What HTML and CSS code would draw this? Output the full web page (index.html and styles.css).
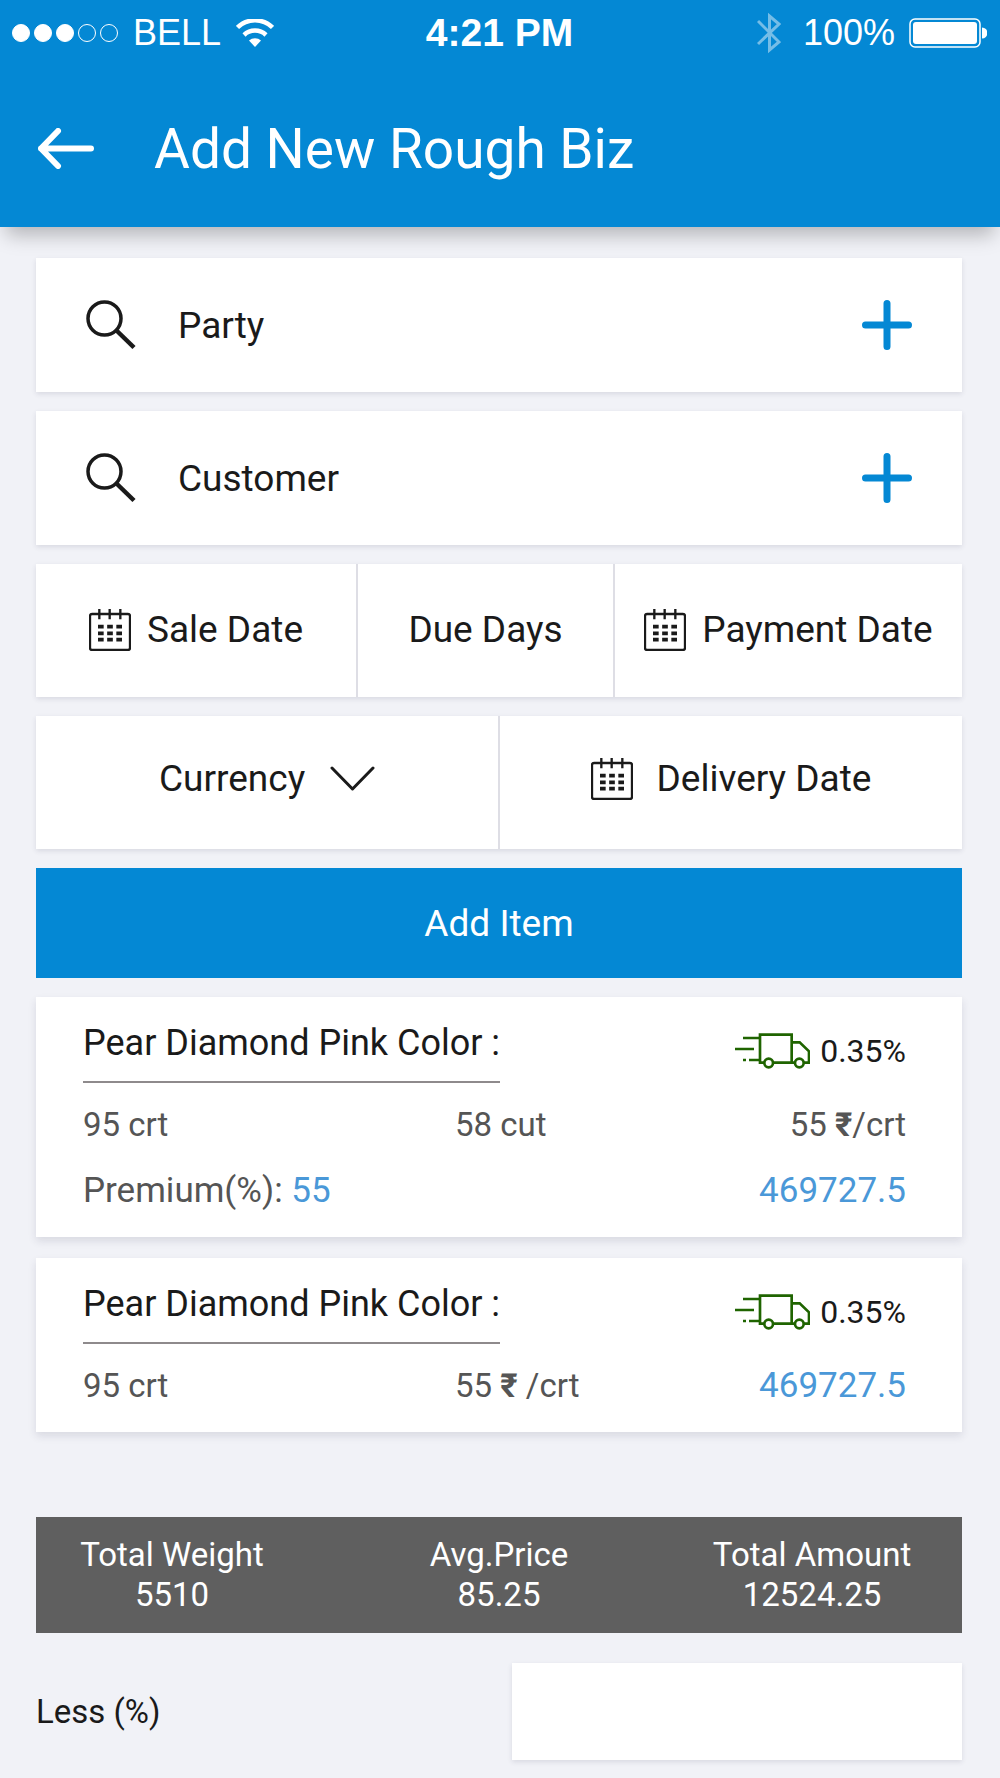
FILE: index.html
```html
<!DOCTYPE html>
<html lang="en">
<head>
    <meta charset="UTF-8">
    <meta name="viewport" content="width=device-width, initial-scale=1.0">
    <title>Add New Rough Biz</title>
    <link rel="stylesheet" href="styles.css">
</head>
<body>
    <svg class="sprite" aria-hidden="true">
        <symbol id="search" viewBox="0 0 50 50">
            <circle cx="18.5" cy="18.5" r="16.5" fill="none" stroke="currentColor" stroke-width="3.5"/>
            <path d="M30.5 30.5L48 47.5" stroke="currentColor" stroke-width="4.5"/>
        </symbol>
        <symbol id="plus" viewBox="0 0 50 50">
            <path d="M25 3.5v43M3.5 25h43" stroke="currentColor" stroke-width="7" stroke-linecap="round"/>
        </symbol>
        <symbol id="calendar" viewBox="0 0 126 126">
            <rect x="3" y="15" width="120" height="108" rx="6" fill="none" stroke="currentColor" stroke-width="7"/>
            <path d="M31 0v31M62 0v31M94 0v31" stroke="currentColor" stroke-width="7"/>
            <path d="M27 53h72M27 73h72M27 92h72" stroke="currentColor" stroke-width="11" stroke-dasharray="17 10.5"/>
        </symbol>
        <symbol id="truck" viewBox="0 0 225 108">
            <g fill="none" stroke="currentColor" stroke-width="8">
                <path d="M24 15h50M0 48h57M24 81h9M42 81h32"/>
                <path d="M87 89H75V5h95v84M114 89h66M170 28h24l28 27v34h-15"/>
                <circle cx="101" cy="90" r="13"/>
                <circle cx="193" cy="90" r="13"/>
            </g>
        </symbol>
    </svg>

    <header class="app-header">
        <div class="status-bar">
            <div class="carrier">
                <span class="signal"><i class="on"></i><i class="on"></i><i class="on"></i><i></i><i></i></span>
                <span>BELL</span>
                <svg class="wifi" viewBox="0 0 38 28" fill="none" stroke="currentColor" stroke-width="4.5">
                    <path d="M1.5 8.5A25 25 0 0 1 36.5 8.5M8 16A16 16 0 0 1 30 16"/>
                    <path d="M19 28l-6-6.5a9 9 0 0 1 12 0z" fill="currentColor" stroke="none"/>
                </svg>
            </div>
            <span class="clock">4:21 PM</span>
            <div class="power">
                <svg class="bluetooth" viewBox="0 0 24 42" fill="none" stroke="currentColor" stroke-width="3">
                    <path d="M1 9l21 21-9.5 8V4L22 12 1 32"/>
                </svg>
                <span>100%</span>
                <svg class="battery" viewBox="0 0 78 30">
                    <rect x="1" y="1" width="70" height="28" rx="5" fill="none" stroke="currentColor" stroke-width="1.5"/>
                    <rect x="4" y="4" width="64" height="22" rx="3" fill="currentColor"/>
                    <path d="M73 9.5a5.5 5.5 0 0 1 0 11z" fill="currentColor"/>
                </svg>
            </div>
        </div>
        <div class="title-bar">
            <a href="#" class="back" aria-label="Back">
                <svg viewBox="0 0 56 41" fill="none" stroke="currentColor" stroke-width="6" stroke-linecap="round" stroke-linejoin="round">
                    <path d="M20 3L3 20.5 20 38M3 20.5h50"/>
                </svg>
            </a>
            <h1>Add New Rough Biz</h1>
        </div>
    </header>

    <main class="form">
        <div class="card lookup">
            <svg class="icon-search"><use href="#search"/></svg>
            <input type="text" placeholder="Party" aria-label="Party">
            <button type="button" class="add" aria-label="Add party"><svg><use href="#plus"/></svg></button>
        </div>
        <div class="card lookup">
            <svg class="icon-search"><use href="#search"/></svg>
            <input type="text" placeholder="Customer" aria-label="Customer">
            <button type="button" class="add" aria-label="Add customer"><svg><use href="#plus"/></svg></button>
        </div>

        <div class="card fields dates">
            <button type="button" class="field"><svg class="icon-calendar"><use href="#calendar"/></svg>Sale Date</button>
            <input type="text" class="field" placeholder="Due Days" aria-label="Due Days">
            <button type="button" class="field"><svg class="icon-calendar"><use href="#calendar"/></svg>Payment Date</button>
        </div>
        <div class="card fields delivery">
            <div class="field">
                <select aria-label="Currency">
                    <option>Currency</option>
                    <option>INR</option>
                    <option>USD</option>
                </select>
                <svg class="chevron" viewBox="0 0 45 25" fill="none" stroke="currentColor" stroke-width="3" stroke-linecap="round" stroke-linejoin="round">
                    <path d="M2 2l20.5 21L43 2"/>
                </svg>
            </div>
            <button type="button" class="field"><svg class="icon-calendar"><use href="#calendar"/></svg>Delivery Date</button>
        </div>

        <button type="button" class="add-item">Add Item</button>

        <section class="items">
            <article class="card item">
                <div class="item-head">
                    <h2>Pear Diamond Pink Color :</h2>
                    <span class="rate"><svg class="icon-truck"><use href="#truck"/></svg>0.35%</span>
                </div>
                <div class="item-row">
                    <span>95 crt</span>
                    <span>58 cut</span>
                    <span class="last">55 <b>₹</b>/crt</span>
                </div>
                <div class="item-row">
                    <span class="premium">Premium(%): <em>55</em></span>
                    <span class="last amount">469727.5</span>
                </div>
            </article>
            <article class="card item">
                <div class="item-head">
                    <h2>Pear Diamond Pink Color :</h2>
                    <span class="rate"><svg class="icon-truck"><use href="#truck"/></svg>0.35%</span>
                </div>
                <div class="item-row">
                    <span>95 crt</span>
                    <span>55 <b>₹</b> /crt</span>
                    <span class="last amount">469727.5</span>
                </div>
            </article>
        </section>

        <dl class="summary">
            <div><dt>Total Weight</dt><dd>5510</dd></div>
            <div><dt>Avg.Price</dt><dd>85.25</dd></div>
            <div><dt>Total Amount</dt><dd>12524.25</dd></div>
        </dl>

        <div class="less">
            <label for="less">Less (%)</label>
            <input type="text" id="less" class="card">
        </div>
    </main>
</body>
</html>
```
FILE: styles.css
```css
* {
    box-sizing: border-box;
}

body {
    margin: 0;
    background-color: #f1f2f7;
    color: #1a1a1a;
    font-family: Roboto, sans-serif;
    font-size: 37px;
    font-weight: 400;
}

button, input, select {
    margin: 0;
    padding: 0;
    border: none;
    border-radius: 0;
    background: none;
    color: inherit;
    font: inherit;
}

button, select {
    cursor: pointer;
}

input:focus, select:focus {
    outline: none;
}

input::placeholder {
    color: #1a1a1a;
    opacity: 1;
}

svg {
    display: block;
    flex: none;
}

.sprite {
    display: none;
}

/* header */
.app-header {
    background-color: #0488d4;
    color: #fff;
    box-shadow: 0 14px 18px -6px rgba(0, 0, 0, 0.25);
}

.status-bar {
    display: grid;
    grid-template-columns: 1fr auto 1fr;
    align-items: center;
    height: 66px;
    padding: 0 13px 0 12px;
    font-family: "Liberation Sans", sans-serif;
    font-size: 36px;
}

.carrier, .power {
    display: flex;
    align-items: center;
}

.carrier {
    gap: 15px;
}

.signal {
    display: flex;
    gap: 4px;
}

.signal i {
    width: 18px;
    height: 18px;
    border: 1px solid #fff;
    border-radius: 50%;
}

.signal .on {
    background-color: #fff;
}

.wifi {
    width: 38px;
    height: 28px;
}

.clock {
    font-size: 39px;
    font-weight: 700;
}

.power {
    justify-content: flex-end;
    gap: 14px;
}

.bluetooth {
    width: 24px;
    height: 42px;
    margin-right: 8px;
    opacity: 0.45;
}

.battery {
    width: 78px;
    height: 30px;
}

.title-bar {
    display: flex;
    align-items: center;
    gap: 60px;
    height: 161px;
    padding: 4px 38px 0;
}

.back {
    color: #fff;
}

.back svg {
    width: 56px;
    height: 41px;
}

h1 {
    margin: 0;
    font-size: 55px;
    font-weight: 400;
}

/* form */
.form {
    display: flex;
    flex-direction: column;
    gap: 19px;
    padding: 31px 38px 18px 36px;
}

.card {
    background-color: #fff;
    box-shadow: 0 2px 5px rgba(40, 40, 70, 0.12);
}

.lookup {
    display: flex;
    align-items: center;
    height: 134px;
    padding: 0 50px;
    gap: 42px;
}

.lookup input {
    flex: 1;
    min-width: 0;
}

.icon-search, .add svg {
    width: 50px;
    height: 50px;
}

.add {
    color: #0488d4;
}

.fields {
    display: grid;
    height: 133px;
    background-color: #dedee5;
}

.dates {
    grid-template-columns: 320fr 255fr 347fr;
    gap: 2px;
}

.delivery {
    grid-template-columns: 1fr 1fr;
    gap: 2px;
}

.field {
    display: flex;
    align-items: center;
    justify-content: center;
    gap: 16px;
    min-width: 0;
    padding-bottom: 2px;
    background-color: #fff;
    text-align: center;
    white-space: nowrap;
}

.delivery .field {
    gap: 24px;
    padding-bottom: 8px;
}

.field select {
    appearance: none;
}

.icon-calendar {
    width: 42px;
    height: 42px;
}

.chevron {
    width: 45px;
    height: 25px;
}

.add-item {
    height: 110px;
    background-color: #0488d4;
    color: #fff;
}

/* items */
.items {
    display: flex;
    flex-direction: column;
    gap: 21px;
}

.item {
    padding: 22px 56px 22px 47px;
    color: #555;
    font-size: 33px;
    line-height: 48px;
    box-shadow: 0 4px 8px rgba(40, 40, 70, 0.12);
}

.item-head {
    display: flex;
    align-items: center;
    justify-content: space-between;
    color: #1a1a1a;
}

.item h2 {
    margin: 0;
    padding-bottom: 14px;
    border-bottom: 2px solid #8e8a8c;
    font-size: 36px;
    font-weight: 400;
}

.rate {
    display: flex;
    align-items: center;
    gap: 10px;
    font-size: 32px;
}

.icon-truck {
    width: 75px;
    height: 36px;
    color: #1f6400;
}

.item-row {
    display: grid;
    grid-template-columns: 372fr 200fr 251fr;
    margin-top: 18px;
    white-space: nowrap;
}

.item-row .last {
    grid-column: 3;
    text-align: right;
}

.item-row b {
    font-weight: 700;
}

.amount, .item em {
    color: #4a98d8;
    font-style: normal;
}

.amount, .premium {
    font-size: 35px;
}

/* summary */
.summary {
    display: grid;
    grid-template-columns: 272fr 382fr 244fr;
    margin: 66px 0 11px;
    padding: 18px 28px 18px 0;
    background-color: #5f5f5f;
    color: #fff;
    font-size: 33px;
    line-height: 40px;
    text-align: center;
}

.summary dd {
    margin: 0;
}

.less {
    display: grid;
    grid-template-columns: 476fr 450fr;
    align-items: center;
    font-size: 33px;
}

.less input {
    width: 100%;
    height: 97px;
    padding: 0 24px;
}
```
